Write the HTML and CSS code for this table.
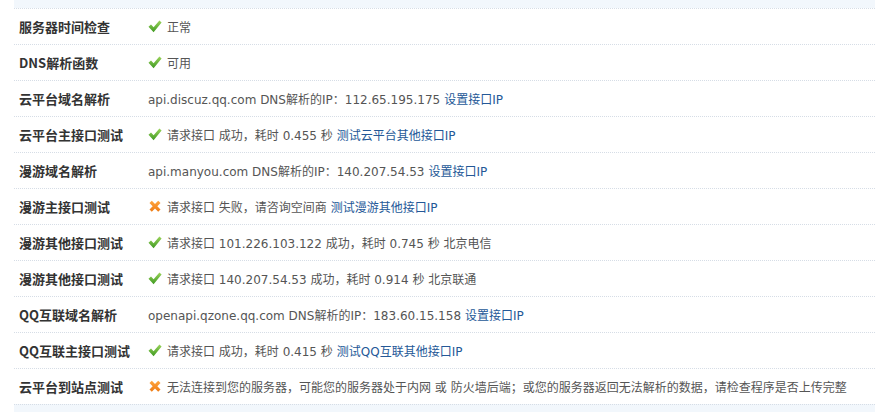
FILE: index.html
```html
<!DOCTYPE html>
<html>
<head>
<meta charset="utf-8">
<link rel="stylesheet" href="styles.css">
</head>
<body>
<svg class="defs" width="0" height="0">
  <defs>
    <linearGradient id="gOk" x1="0" y1="0" x2="0" y2="1">
      <stop offset="0" stop-color="#9ad35a"/>
      <stop offset="1" stop-color="#3f9a22"/>
    </linearGradient>
    <linearGradient id="gErr" x1="0" y1="0" x2="0" y2="1">
      <stop offset="0" stop-color="#ffa640"/>
      <stop offset="1" stop-color="#ee7a12"/>
    </linearGradient>
  </defs>
</svg>
<div class="panel">
  <div class="strip"></div>
  <div class="row"><div class="label">服务器时间检查</div><div class="value"><svg class="ico" viewBox="0 0 14 13"><path class="ok" d="M0.5 6.8 L3 4.6 L5.6 7.3 L11.4 0.6 L13.6 2.6 L5.6 12.2 Z"/></svg>正常</div></div>
  <div class="row"><div class="label">DNS解析函数</div><div class="value"><svg class="ico" viewBox="0 0 14 13"><path class="ok" d="M0.5 6.8 L3 4.6 L5.6 7.3 L11.4 0.6 L13.6 2.6 L5.6 12.2 Z"/></svg>可用</div></div>
  <div class="row"><div class="label">云平台域名解析</div><div class="value">api.discuz.qq.com DNS解析的IP：112.65.195.175 <a>设置接口IP</a></div></div>
  <div class="row"><div class="label">云平台主接口测试</div><div class="value"><svg class="ico" viewBox="0 0 14 13"><path class="ok" d="M0.5 6.8 L3 4.6 L5.6 7.3 L11.4 0.6 L13.6 2.6 L5.6 12.2 Z"/></svg>请求接口 成功，耗时 0.455 秒 <a>测试云平台其他接口IP</a></div></div>
  <div class="row"><div class="label">漫游域名解析</div><div class="value">api.manyou.com DNS解析的IP：140.207.54.53 <a>设置接口IP</a></div></div>
  <div class="row"><div class="label">漫游主接口测试</div><div class="value"><svg class="ico" viewBox="0 0 14 13"><path class="err" d="M1.5 3 L3.8 0.8 L7 4 L10.2 0.8 L12.5 3 L9.3 6.3 L12.5 9.5 L10.2 11.8 L7 8.6 L3.8 11.8 L1.5 9.5 L4.7 6.3 Z"/></svg>请求接口 失败，请咨询空间商 <a>测试漫游其他接口IP</a></div></div>
  <div class="row"><div class="label">漫游其他接口测试</div><div class="value"><svg class="ico" viewBox="0 0 14 13"><path class="ok" d="M0.5 6.8 L3 4.6 L5.6 7.3 L11.4 0.6 L13.6 2.6 L5.6 12.2 Z"/></svg>请求接口 101.226.103.122 成功，耗时 0.745 秒 北京电信</div></div>
  <div class="row"><div class="label">漫游其他接口测试</div><div class="value"><svg class="ico" viewBox="0 0 14 13"><path class="ok" d="M0.5 6.8 L3 4.6 L5.6 7.3 L11.4 0.6 L13.6 2.6 L5.6 12.2 Z"/></svg>请求接口 140.207.54.53 成功，耗时 0.914 秒 北京联通</div></div>
  <div class="row"><div class="label">QQ互联域名解析</div><div class="value">openapi.qzone.qq.com DNS解析的IP：183.60.15.158 <a>设置接口IP</a></div></div>
  <div class="row"><div class="label">QQ互联主接口测试</div><div class="value"><svg class="ico" viewBox="0 0 14 13"><path class="ok" d="M0.5 6.8 L3 4.6 L5.6 7.3 L11.4 0.6 L13.6 2.6 L5.6 12.2 Z"/></svg>请求接口 成功，耗时 0.415 秒 <a>测试QQ互联其他接口IP</a></div></div>
  <div class="row"><div class="label">云平台到站点测试</div><div class="value"><svg class="ico" viewBox="0 0 14 13"><path class="err" d="M1.5 3 L3.8 0.8 L7 4 L10.2 0.8 L12.5 3 L9.3 6.3 L12.5 9.5 L10.2 11.8 L7 8.6 L3.8 11.8 L1.5 9.5 L4.7 6.3 Z"/></svg>无法连接到您的服务器，可能您的服务器处于内网 或 防火墙后端；或您的服务器返回无法解析的数据，请检查程序是否上传完整</div></div>
  <div class="strip bottom"></div>
</div>
</body>
</html>
```
FILE: styles.css
```css
html, body {
  margin: 0;
  padding: 0;
  background: #fff;
}
body {
  font-family: "DejaVu Sans", "Noto Sans CJK SC", sans-serif;
  font-size: 12px;
  color: #555;
}
.defs {
  position: absolute;
  width: 0;
  height: 0;
}
.panel {
  margin-left: 14px;
}
.strip {
  height: 8px;
  background: #f2f7fc;
}
.strip.bottom {
  height: 8px;
  border-top: 1px dotted #d6dde6;
}
.row {
  display: flex;
  align-items: center;
  height: 35px;
  border-top: 1px dotted #d6dde6;
}
.label {
  width: 129px;
  padding-left: 5px;
  font-family: "Noto Sans CJK SC", sans-serif;
  font-weight: bold;
  font-size: 13px;
  color: #333;
}
.value {
  display: flex;
  align-items: center;
  white-space: nowrap;
}
.ico {
  width: 14px;
  height: 13px;
  margin-right: 5px;
}
.ok { fill: url(#gOk); }
.err { fill: url(#gErr); }
a {
  color: #245897;
  margin-left: 4px;
}
```
